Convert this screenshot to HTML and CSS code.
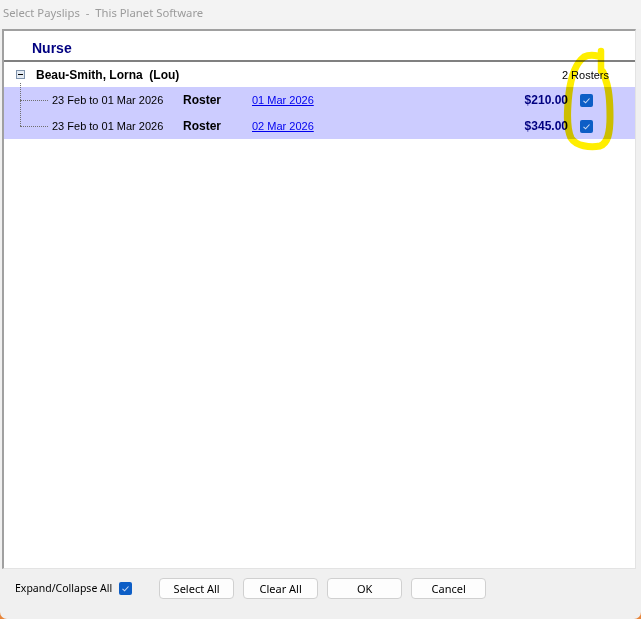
FILE: index.html
```html
<!DOCTYPE html>
<html lang="en">
<head>
    <meta charset="UTF-8">
    <title>Select Payslips - This Planet Software</title>
    <link rel="stylesheet" href="styles.css">
</head>
<body>

    <div class="window">
        <div class="titlebar">Select Payslips  -  This Planet Software</div>

        <!-- Payslip list -->
        <div class="panel">
            <div class="panel-head">Nurse</div>

            <div class="person">
                <span class="toggle">
                    <svg width="9" height="9" viewBox="0 0 9 9">
                        <rect x="0.5" y="0.5" width="8" height="8" fill="#e4ebf3" stroke="#7f93ac"/>
                        <rect x="2" y="4" width="5" height="1" fill="#000"/>
                    </svg>
                </span>
                <span class="person-name">Beau-Smith, Lorna  (Lou)</span>
                <span class="person-count">2 Rosters</span>
            </div>

            <div class="rows">
                <div class="row">
                    <span class="branch"></span>
                    <span class="period">23 Feb to 01 Mar 2026</span>
                    <span class="kind">Roster</span>
                    <a class="paydate" href="#">01 Mar 2026</a>
                    <span class="amount">$210.00</span>
                    <span class="check">
                        <svg width="13" height="13" viewBox="0 0 13 13">
                            <rect width="13" height="13" rx="2" fill="#0d5ec6"/>
                            <path d="M3.5 6.8 L5.6 8.8 L9.5 4.5" fill="none" stroke="#c9d9f2" stroke-width="1.1"/>
                        </svg>
                    </span>
                </div>
                <div class="row">
                    <span class="branch last"></span>
                    <span class="period">23 Feb to 01 Mar 2026</span>
                    <span class="kind">Roster</span>
                    <a class="paydate" href="#">02 Mar 2026</a>
                    <span class="amount">$345.00</span>
                    <span class="check">
                        <svg width="13" height="13" viewBox="0 0 13 13">
                            <rect width="13" height="13" rx="2" fill="#0d5ec6"/>
                            <path d="M3.5 6.8 L5.6 8.8 L9.5 4.5" fill="none" stroke="#c9d9f2" stroke-width="1.1"/>
                        </svg>
                    </span>
                </div>
            </div>

            <!-- highlighter mark drawn on the screenshot -->
            <svg class="scribble" width="60" height="110" viewBox="0 0 60 110">
                <path d="M41 6 L41 26" fill="none" stroke="#ffee00" stroke-width="6.5" stroke-linecap="round"/>
                <path d="M38 11 C33 10 28 10 24 12 C16 18 11 32 9 48 C7 66 6 82 11 93 C16 101 30 103 40 101 C48 98 50 88 50 72 C50 56 49 44 46 36 C45 32 44 29 43 27" fill="none" stroke="#ffee00" stroke-width="7" stroke-linecap="round" stroke-linejoin="round"/>
            </svg>
        </div>

        <div class="footer">
            <label class="expand">
                Expand/Collapse All
                <svg width="13" height="13" viewBox="0 0 13 13">
                    <rect width="13" height="13" rx="2" fill="#0d5ec6"/>
                    <path d="M3.5 6.8 L5.6 8.8 L9.5 4.5" fill="none" stroke="#c9d9f2" stroke-width="1.1"/>
                </svg>
            </label>
            <button class="btn">Select All</button>
            <button class="btn">Clear All</button>
            <button class="btn">OK</button>
            <button class="btn">Cancel</button>
        </div>
    </div>

</body>
</html>
```

FILE: styles.css
```css
html, body {
    margin: 0;
    padding: 0;
}

body {
    width: 641px;
    height: 619px;
    background-color: #e7853a;
    overflow: hidden;
}

.window {
    width: 641px;
    height: 619px;
    background-color: #f0f0f0;
    border-radius: 0 7px 7px 7px;
    display: flex;
    flex-direction: column;
    font-family: 'Liberation Sans', Arial, sans-serif;
    font-size: 11px;
    color: #000;
}

.titlebar {
    height: 29px;
    padding-left: 3px;
    line-height: 26px;
    font-family: 'Noto Sans', sans-serif;
    font-size: 11.3px;
    color: #9b9b9b;
    white-space: pre;
    background-color: #f3f3f3;
}

.panel {
    position: relative;
    margin-left: 2px;
    width: 631px;
    height: 537px;
    background-color: #fff;
    border-top: 2px solid #a0a0a0;
    border-left: 2px solid #a0a0a0;
    border-right: 1px solid #e3e3e3;
    border-bottom: 1px solid #e3e3e3;
}

.panel-head {
    height: 29px;
    padding-left: 28px;
    line-height: 34px;
    font-size: 14px;
    font-weight: bold;
    color: #000080;
    border-bottom: 2px solid #808080;
}

.person {
    height: 25px;
    display: flex;
    align-items: center;
}

.toggle {
    width: 9px;
    height: 9px;
    margin-left: 12px;
    margin-right: 11px;
    display: flex;
}

.person-name {
    font-size: 12px;
    font-weight: bold;
    white-space: pre;
}

.person-count {
    margin-left: auto;
    margin-right: 26px;
}

.rows {
    background-color: #ccccff;
}

.row {
    height: 26px;
    display: flex;
    align-items: center;
    position: relative;
}

.branch {
    width: 30px;
    height: 26px;
    margin-left: 16px;
    margin-right: 2px;
    position: relative;
}

.branch::before {
    content: '';
    position: absolute;
    left: 0;
    top: -4px;
    height: 17px;
    border-left: 1px dotted #707070;
}

.branch.last::before {
    top: -13px;
    height: 26px;
}

.branch::after {
    content: '';
    position: absolute;
    left: 0;
    top: 13px;
    width: 28px;
    border-top: 1px dotted #707070;
}

.period {
    width: 131px;
}

.kind {
    width: 69px;
    font-size: 12px;
    font-weight: bold;
}

.paydate {
    color: #0000ee;
    text-decoration: underline;
}

.amount {
    margin-left: auto;
    font-weight: bold;
    font-size: 12px;
    color: #000080;
}

.check {
    width: 13px;
    height: 13px;
    margin-left: 12px;
    margin-right: 42px;
    display: flex;
}

.scribble {
    position: absolute;
    left: 556px;
    top: 14px;
    mix-blend-mode: multiply;
}

.footer {
    flex: 1;
    display: flex;
    align-items: center;
    padding: 0 0 12px 15px;
    gap: 9px;
}

.expand {
    display: flex;
    align-items: center;
    gap: 7px;
    margin-right: 18px;
    font-family: 'Noto Sans', sans-serif;
    font-size: 10.5px;
}

.expand svg {
    flex-shrink: 0;
}

.btn {
    width: 75px;
    height: 21px;
    padding: 0;
    background-color: #fdfdfd;
    border: 1px solid #d0d0d0;
    border-radius: 4px;
    font-family: 'Noto Sans', sans-serif;
    font-size: 11px;
    color: #000;
}
```
